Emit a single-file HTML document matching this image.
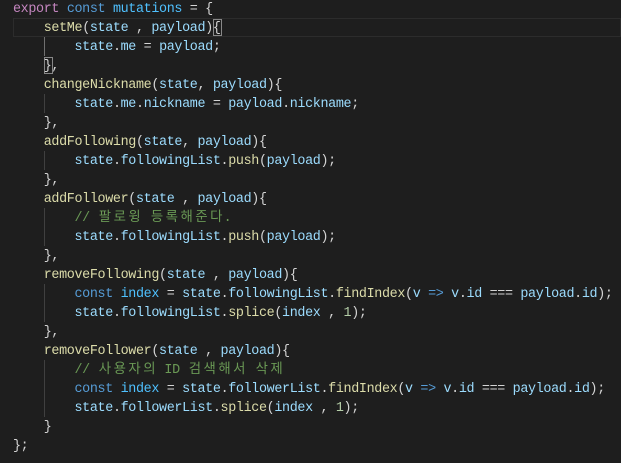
<!DOCTYPE html>
<html><head><meta charset="utf-8"><style>
body{margin:0;background:#1e1e1e;width:621px;height:463px;overflow:hidden;position:relative}
.c{position:absolute;left:13px;top:0px;font-family:"Liberation Mono","Noto Sans CJK KR",monospace;font-size:13.4px;letter-spacing:-0.35px;line-height:19px;color:#d4d4d4}
.l{height:19px;white-space:pre}
.k{color:#c586c0}.b{color:#569cd6}.v{color:#9cdcfe}.cv{color:#4fc1ff}.f{color:#dcdcaa}.cm{color:#6a9955}.n{color:#b5cea8}
.h{display:inline-block;width:14.8px;text-align:center;letter-spacing:0}
.g{position:absolute;left:44px;width:1px;background:#404040}
.hl{position:absolute;left:13px;right:0;top:18px;height:17px;border:1px solid #2c2c2c}
.bx{position:absolute;border:1px solid #888;width:7px;height:15px}
</style></head><body>
<div class="hl"></div>
<div class="g" style="top:37px;height:19px;background:#707070"></div>
<div class="g" style="top:94px;height:19px"></div>
<div class="g" style="top:151px;height:19px"></div>
<div class="g" style="top:208px;height:38px"></div>
<div class="g" style="top:284px;height:38px"></div>
<div class="g" style="top:360px;height:57px"></div>
<div class="bx" style="left:213px;top:19px"></div>
<div class="bx" style="left:44px;top:57px"></div>
<div class="c"><div class="l"><span class="k">export</span> <span class="b">const</span> <span class="cv">mutations</span> = {</div><div class="l">    <span class="f">setMe</span>(<span class="v">state</span> , <span class="v">payload</span>){</div><div class="l">        <span class="v">state</span>.<span class="v">me</span> = <span class="v">payload</span>;</div><div class="l">    },</div><div class="l">    <span class="f">changeNickname</span>(<span class="v">state</span>, <span class="v">payload</span>){</div><div class="l">        <span class="v">state</span>.<span class="v">me</span>.<span class="v">nickname</span> = <span class="v">payload</span>.<span class="v">nickname</span>;</div><div class="l">    },</div><div class="l">    <span class="f">addFollowing</span>(<span class="v">state</span>, <span class="v">payload</span>){</div><div class="l">        <span class="v">state</span>.<span class="v">followingList</span>.<span class="f">push</span>(<span class="v">payload</span>);</div><div class="l">    },</div><div class="l">    <span class="f">addFollower</span>(<span class="v">state</span> , <span class="v">payload</span>){</div><div class="l">        <span class="cm">// <span class="h">팔</span><span class="h">로</span><span class="h">윙</span> <span class="h">등</span><span class="h">록</span><span class="h">해</span><span class="h">준</span><span class="h">다</span>.</span></div><div class="l">        <span class="v">state</span>.<span class="v">followingList</span>.<span class="f">push</span>(<span class="v">payload</span>);</div><div class="l">    },</div><div class="l">    <span class="f">removeFollowing</span>(<span class="v">state</span> , <span class="v">payload</span>){</div><div class="l">        <span class="b">const</span> <span class="cv">index</span> = <span class="v">state</span>.<span class="v">followingList</span>.<span class="f">findIndex</span>(<span class="v">v</span> <span class="b">=&gt;</span> <span class="v">v</span>.<span class="v">id</span> === <span class="v">payload</span>.<span class="v">id</span>);</div><div class="l">        <span class="v">state</span>.<span class="v">followingList</span>.<span class="f">splice</span>(<span class="v">index</span> , <span class="n">1</span>);</div><div class="l">    },</div><div class="l">    <span class="f">removeFollower</span>(<span class="v">state</span> , <span class="v">payload</span>){</div><div class="l">        <span class="cm">// <span class="h">사</span><span class="h">용</span><span class="h">자</span><span class="h">의</span> ID <span class="h">검</span><span class="h">색</span><span class="h">해</span><span class="h">서</span> <span class="h">삭</span><span class="h">제</span></span></div><div class="l">        <span class="b">const</span> <span class="cv">index</span> = <span class="v">state</span>.<span class="v">followerList</span>.<span class="f">findIndex</span>(<span class="v">v</span> <span class="b">=&gt;</span> <span class="v">v</span>.<span class="v">id</span> === <span class="v">payload</span>.<span class="v">id</span>);</div><div class="l">        <span class="v">state</span>.<span class="v">followerList</span>.<span class="f">splice</span>(<span class="v">index</span> , <span class="n">1</span>);</div><div class="l">    }</div><div class="l">};</div></div>
</body></html>
